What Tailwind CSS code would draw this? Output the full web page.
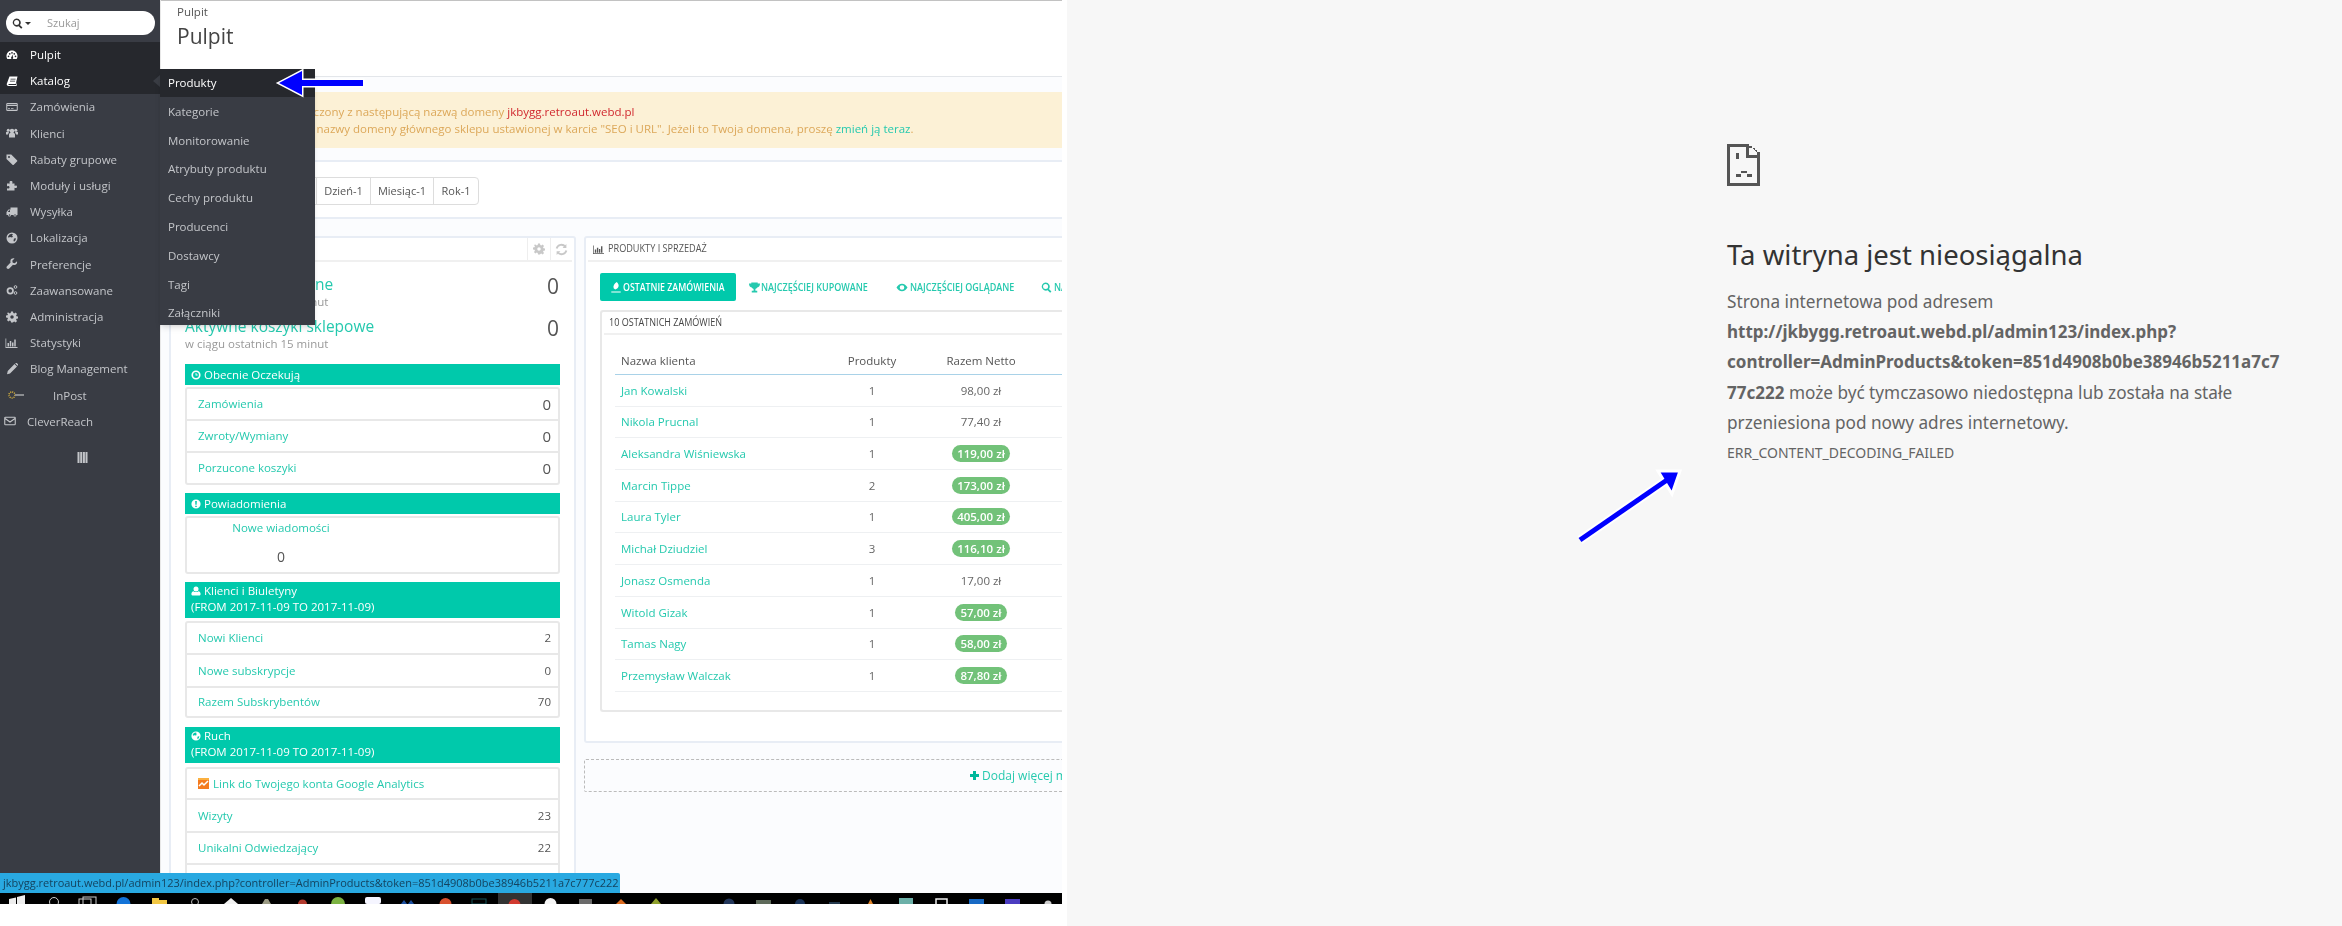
<!DOCTYPE html>
<html lang="pl">
<head>
    <meta charset="UTF-8">
    <title>Pulpit</title>
    <script src="https://cdn.jsdelivr.net/npm/@tailwindcss/browser@4"></script>
</head>
<body class="bg-white font-['Open_Sans',sans-serif]">

    <!-- shared sidebar icons -->
    <svg class="hidden">
        <symbol id="i-gauge" viewBox="0 0 24 24"><path fill-rule="evenodd" d="M12 3C5.5 3 1 8 1 14c0 2.5.7 4.700 1.800 6h18.400c1.100-1.300 1.800-3.500 1.800-6 0-6-4.500-11-11-11zM5 13a1.700 1.700 0 1 1 0 3.400A1.700 1.700 0 0 1 5 13zm2.500-5a1.700 1.700 0 1 1 0 3.400 1.700 1.700 0 0 1 0-3.400zM12 6a1.700 1.700 0 1 1 0 3.400A1.700 1.700 0 0 1 12 6zm4.500 2a1.700 1.700 0 1 1 0 3.400 1.700 1.700 0 0 1 0-3.400zM19 13a1.700 1.700 0 1 1 0 3.400 1.700 1.700 0 0 1 0-3.400zM11 16l2-5 1 5.500a2.200 2.200 0 1 1-3-.5z"/></symbol>
        <symbol id="i-book" viewBox="0 0 24 24"><path fill-rule="evenodd" d="M7 3h16l-3.500 15H6c-1.200 0-1.700.6-1.500 1.200.2.500.8.800 1.500.8h14.500L22 14v6l-1.500 2H5c-2 0-3.500-1.500-3.500-3.500 0-.6.100-1 .3-1.500zM9 7.500v1.500h10l.4-1.500zm-1 4v1.500h10l.4-1.500z"/></symbol>
        <symbol id="i-card" viewBox="0 0 24 24"><path fill-rule="evenodd" d="M3 4h18a2.500 2.500 0 0 1 2.500 2.500v11A2.500 2.500 0 0 1 21 20H3a2.500 2.500 0 0 1-2.500-2.500v-11A2.500 2.500 0 0 1 3 4zm-.5 6v7.500h19V10zm0-3.500V8h19V6.500zM4 14h4v1.500H4zm6 0h5v1.500h-5z"/></symbol>
        <symbol id="i-users" viewBox="0 0 24 24"><circle cx="12" cy="8" r="4.500"/><circle cx="4.500" cy="6.500" r="3"/><circle cx="19.500" cy="6.500" r="3"/><path d="M6 15c0-2 1.500-3 3-3h6c1.500 0 3 1 3 3v6H6zM0 11c0-1 1-1.500 2-1.500h3l1 2.500c-1.300.5-2 1.500-2 3H0zm24 0c0-1-1-1.500-2-1.500h-3l-1 2.500c1.300.5 2 1.500 2 3h4z"/></symbol>
        <symbol id="i-tag" viewBox="0 0 24 24"><path fill-rule="evenodd" d="M1 3h9.500L22 14.500c.8.800.8 1.800 0 2.500l-6.500 6.500c-.8.700-1.800.7-2.500 0L1 12zM6 6a2 2 0 1 0 0 4 2 2 0 0 0 0-4z"/></symbol>
        <symbol id="i-puzzle" viewBox="0 0 24 24"><path d="M10 2c2 0 3 1 3 2.500 0 1-.7 1.500-.7 2.500H17v4.500c1 0 1.500-.7 2.500-.7 1.500 0 2.500 1 2.500 2.700s-1 2.700-2.500 2.700c-1 0-1.500-.7-2.500-.7V21H2v-4.500c1 0 1.500.7 2.500.7C6 17.200 7 16 7 14.500s-1-2.700-2.500-2.700c-1 0-1.500.7-2.500.7V7h5.700c0-1-.7-1.500-.7-2.500C7 3 8 2 10 2z"/></symbol>
        <symbol id="i-truck" viewBox="0 0 24 24"><path fill-rule="evenodd" d="M9 3h14v15h-2a3 3 0 0 1-6 0h-5a3 3 0 0 1-6 0H1v-6l4-5h4zM3.500 12H8V8.500H6.300zM7 16.500a1.500 1.500 0 1 0 0 3 1.500 1.500 0 0 0 0-3zm11 0a1.500 1.500 0 1 0 0 3 1.500 1.500 0 0 0 0-3z"/></symbol>
        <symbol id="i-globe" viewBox="0 0 24 24"><path fill-rule="evenodd" d="M12 1a11 11 0 1 0 0 22 11 11 0 0 0 0-22zM7 5l4-1.500 3 1-2 2.500 2 2-2 2-4-1-3 1.500L4 9zm9 8l4-.5-1 4-3 3-1-2.500z"/></symbol>
        <symbol id="i-wrench" viewBox="0 0 24 24"><path d="M22 6.500l-4.500 4-4-1-1-4L17 1c-3.500-1-7 .5-8 3.500-.5 1.500-.4 3 .2 4.500L2 16.500c-1.300 1.300-1.300 3.300 0 4.500 1.300 1.300 3.200 1.300 4.500 0l7.500-7.300c4.500 1.500 9.500-2.200 8-6.700z"/></symbol>
        <symbol id="i-cog" viewBox="0 0 24 24"><path fill-rule="evenodd" d="M10 1h4l.6 3.200 2 .8L19.300 3l2.800 2.800-2 2.700.9 2 3 .5v4l-3 .5-.9 2 2 2.700-2.800 2.800-2.700-2-2 .8L14 23h-4l-.6-3.200-2-.8-2.700 2-2.800-2.800 2-2.700-.9-2-3-.5v-4l3-.5.9-2-2-2.700L4.700 3l2.700 2 2-.8zM12 8.500a3.500 3.500 0 1 0 0 7 3.500 3.500 0 0 0 0-7z"/></symbol>
        <symbol id="i-cogs" viewBox="0 0 24 24"><circle cx="8.500" cy="13.500" r="5.500" fill="none" stroke="currentColor" stroke-width="3.500"/><circle cx="19" cy="6" r="2.700" fill="none" stroke="currentColor" stroke-width="2"/><circle cx="19" cy="18" r="2.700" fill="none" stroke="currentColor" stroke-width="2"/></symbol>
        <symbol id="i-chart" viewBox="0 0 24 24"><path d="M0 3h1.500v17H24v2H0zM4 12h3v7H4zm4.500-4h3v11h-3zM13 11h3v8h-3zm4.500-6h3v14h-3z"/></symbol>
        <symbol id="i-pencil" viewBox="0 0 24 24"><path d="M17 2l5 5L8 21l-6 1.500L3.500 16zM18.500 1l1-1c.7-.5 1.500-.5 2 0l2.500 2.500c.5.500.5 1.300 0 2l-1 1z"/></symbol>
        <symbol id="i-mail" viewBox="0 0 24 24"><path fill="none" stroke="currentColor" stroke-width="2.200" d="M3 4.500h18a1.500 1.500 0 0 1 1.500 1.500v12a1.500 1.500 0 0 1-1.500 1.500H3A1.500 1.500 0 0 1 1.500 18V6A1.500 1.500 0 0 1 3 4.500zM2 7l10 7 10-7"/></symbol>
        <symbol id="i-clock" viewBox="0 0 24 24"><path fill-rule="evenodd" d="M12 1a11 11 0 1 0 0 22 11 11 0 0 0 0-22zm0 4a7 7 0 1 1 0 14 7 7 0 0 1 0-14zm-1 2v6h5v-2h-3V7z"/></symbol>
        <symbol id="i-alert" viewBox="0 0 24 24"><path fill-rule="evenodd" d="M12 1a11 11 0 1 0 0 22 11 11 0 0 0 0-22zm-2 4h4l-.5 9h-3zm.2 11h3.600v3h-3.600z"/></symbol>
        <symbol id="i-user" viewBox="0 0 24 24"><circle cx="12" cy="7" r="6"/><path d="M6 12.500c1.500 1.500 3.500 2 6 2s4.500-.5 6-2c3 .5 5 3 5 6.500 0 2.500-1.500 4-4 4H5c-2.500 0-4-1.500-4-4 0-3.500 2-6 5-6.500z"/></symbol>
        <symbol id="i-search" viewBox="0 0 24 24"><path fill-rule="evenodd" d="M10 1a9 9 0 0 1 7.300 14.300l5.500 5.500-2.800 2.800-5.500-5.500A9 9 0 1 1 10 1zm0 3.500a5.500 5.500 0 1 0 0 11 5.500 5.500 0 0 0 0-11z"/></symbol>
    </svg>

    <div class="flex w-[2342px] h-[926px] overflow-hidden">

        <!-- Left half: back office screenshot -->
        <div class="relative w-[1062px] shrink-0 overflow-hidden blur-[0.3px]">
            <div class="flex h-[893px] overflow-hidden">

                <!-- Sidebar -->
                <div class="w-[160px] shrink-0 bg-[#393c44] text-[#c3c5c9] text-[11.5px]">
                    <div class="h-[42px] pt-[11px] pl-[6px]">
                        <div class="flex items-center w-[149px] h-[24px] bg-white rounded-full text-[#222]">
                            <svg class="w-[11px] h-[11px] ml-[6px] fill-[#333]"><use href="#i-search"/></svg>
                            <span class="ml-[2px] w-0 h-0 border-x-[3px] border-x-transparent border-t-[3px] border-t-[#333]"></span>
                            <span class="ml-[16px] text-[#999] text-[11px]">Szukaj</span>
                        </div>
                    </div>
                    <div class="bg-[#26282d] text-white">
                        <div class="flex items-center h-[26px] pl-[6px]"><svg class="w-[12px] h-[12px] fill-current"><use href="#i-gauge"/></svg><span class="ml-[12px]">Pulpit</span></div>
                        <div class="relative flex items-center h-[26px] pl-[6px]"><svg class="w-[12px] h-[12px] fill-current"><use href="#i-book"/></svg><span class="ml-[12px]">Katalog</span><span class="absolute right-0 top-[7px] w-0 h-0 border-y-[6px] border-y-transparent border-r-[7px] border-r-[#3a3d44]"></span></div>
                    </div>
                    <div class="flex items-center h-[26.2px] pl-[6px]"><svg class="w-[12px] h-[12px] fill-current"><use href="#i-card"/></svg><span class="ml-[12px]">Zamówienia</span></div>
                    <div class="flex items-center h-[26.2px] pl-[6px]"><svg class="w-[12px] h-[12px] fill-current"><use href="#i-users"/></svg><span class="ml-[12px]">Klienci</span></div>
                    <div class="flex items-center h-[26.2px] pl-[6px]"><svg class="w-[12px] h-[12px] fill-current"><use href="#i-tag"/></svg><span class="ml-[12px]">Rabaty grupowe</span></div>
                    <div class="flex items-center h-[26.2px] pl-[6px]"><svg class="w-[12px] h-[12px] fill-current"><use href="#i-puzzle"/></svg><span class="ml-[12px]">Moduły i usługi</span></div>
                    <div class="flex items-center h-[26.2px] pl-[6px]"><svg class="w-[12px] h-[12px] fill-current"><use href="#i-truck"/></svg><span class="ml-[12px]">Wysyłka</span></div>
                    <div class="flex items-center h-[26.2px] pl-[6px]"><svg class="w-[12px] h-[12px] fill-current"><use href="#i-globe"/></svg><span class="ml-[12px]">Lokalizacja</span></div>
                    <div class="flex items-center h-[26.2px] pl-[6px]"><svg class="w-[12px] h-[12px] fill-current"><use href="#i-wrench"/></svg><span class="ml-[12px]">Preferencje</span></div>
                    <div class="flex items-center h-[26.2px] pl-[6px]"><svg class="w-[12px] h-[12px] fill-none stroke-none text-current"><use href="#i-cogs"/></svg><span class="ml-[12px]">Zaawansowane</span></div>
                    <div class="flex items-center h-[26.2px] pl-[6px]"><svg class="w-[12px] h-[12px] fill-current"><use href="#i-cog"/></svg><span class="ml-[12px]">Administracja</span></div>
                    <div class="flex items-center h-[26.2px] pl-[5px]"><svg class="w-[13px] h-[12px] fill-current"><use href="#i-chart"/></svg><span class="ml-[12px]">Statystyki</span></div>
                    <div class="flex items-center h-[26.2px] pl-[6px]"><svg class="w-[12px] h-[12px] fill-current"><use href="#i-pencil"/></svg><span class="ml-[12px]">Blog Management</span></div>
                    <div class="flex items-center h-[26.2px] pl-[7px]">
                        <svg class="w-[18px] h-[10px]" viewBox="0 0 18 10"><circle cx="5" cy="5" r="3" fill="none" stroke="#d8b23c" stroke-width="1.500" stroke-dasharray="1 1"/><rect x="8" y="4" width="9" height="2" fill="#8b8d90"/></svg>
                        <span class="ml-[28px]">InPost</span>
                    </div>
                    <div class="flex items-center h-[26.2px] pl-[4px]"><svg class="w-[12px] h-[12px]"><use href="#i-mail"/></svg><span class="ml-[11px]">CleverReach</span></div>
                    <div class="flex justify-center pt-[18px] pl-[4px]">
                        <svg class="w-[11px] h-[11px] fill-[#c3c5c9]" viewBox="0 0 10 11"><path d="M0 0h2v11H0zm2.700 0h2v11h-2zm2.700 0h2v11h-2zm2.600 0h2v11H8z"/></svg>
                    </div>
                </div>

                <!-- Page content -->
                <div class="flex-1 min-w-0 bg-[#fbfcfe] text-[#666] border-l border-l-[#e8e8e8]">
                    <div class="h-[77px] bg-white border-t border-t-[#c2c2c2] border-b border-b-[#e3e6ea] pl-[16px] pt-[3px]">
                        <div class="text-[11.5px] leading-[16px] text-[#555]">Pulpit</div>
                        <div class="text-[21px] leading-[30px] mt-[1px] text-[#444]">Pulpit</div>
                    </div>

                    <div class="mt-[15px] h-[56px] bg-[#fcf1d6] text-[#dca85a] text-[11.5px] leading-[17px] pt-[11px] pl-[50px] whitespace-nowrap">
                        <div>Jesteś obecnie połączony z następującą nazwą domeny <span class="text-[#d0282f]">jkbygg.retroaut.webd.pl</span></div>
                        <div class="ml-[15px]">Różni się ona od nazwy domeny głównego sklepu ustawionej w karcie "SEO i URL". Jeżeli to Twoja domena, proszę <span class="text-[#25c9ae]">zmień ją teraz</span>.</div>
                    </div>

                    <div class="mt-[12px] h-[59px] bg-white border-y-2 border-y-[#e8edf5] pt-[15px] pl-[29px]">
                        <div class="flex h-[28px] text-[11px] text-[#555] border border-[#ddd] rounded-sm w-fit bg-white">
                            <div class="flex items-center justify-center w-[40px] border-r border-r-[#ddd]">Dzień</div>
                            <div class="flex items-center justify-center w-[50px] border-r border-r-[#ddd]">Miesiąc</div>
                            <div class="flex items-center justify-center w-[36px] border-r border-r-[#ddd]">Rok</div>
                            <div class="flex items-center justify-center w-[54px] border-r border-r-[#ddd]">Dzień-1</div>
                            <div class="flex items-center justify-center w-[63px] border-r border-r-[#ddd]">Miesiąc-1</div>
                            <div class="flex items-center justify-center w-[44px]">Rok-1</div>
                        </div>
                    </div>

                    <div class="flex gap-[8px] pl-[8px] pt-[17px] w-[1100px]">

                        <!-- Left panel -->
                        <div class="w-[407px] h-[700px] shrink-0 bg-white border-2 border-[#e8edf5] rounded-[3px]">
                            <div class="flex justify-end h-[24px] mx-[2px] border-b-2 border-b-[#f0f0f0] text-[#c8c8c8]">
                                <div class="flex items-center justify-center w-[23px] border-l border-l-[#eee]"><svg class="w-[12px] h-[12px] fill-current"><use href="#i-cog"/></svg></div>
                                <div class="flex items-center justify-center w-[22px] border-l border-l-[#eee]">
                                    <svg class="w-[13px] h-[13px]" viewBox="0 0 24 24" fill="none" stroke="currentColor" stroke-width="3.500"><path d="M3 10a9 9 0 0 1 16-3M21 14a9 9 0 0 1-16 3"/><path d="M21 2v7h-7M3 22v-7h7" fill="currentColor" stroke="none"/></svg>
                                </div>
                            </div>
                            <div class="px-[14px] pt-[12px]">
                                <div class="flex justify-between h-[42px]">
                                    <div>
                                        <div class="text-[15.5px] leading-[20px] text-[#25c9ae]">Odwiedzający online</div>
                                        <div class="text-[11.5px] leading-[16px] text-[#999]">w ciągu ostatnich 30 minut</div>
                                    </div>
                                    <div class="text-[21px] leading-[24px] pr-[1px] text-[#555]">0</div>
                                </div>
                                <div class="flex justify-between h-[42px]">
                                    <div>
                                        <div class="text-[15.5px] leading-[20px] text-[#25c9ae]">Aktywne koszyki sklepowe</div>
                                        <div class="text-[11.5px] leading-[16px] text-[#999]">w ciągu ostatnich 15 minut</div>
                                    </div>
                                    <div class="text-[21px] leading-[24px] pr-[1px] text-[#555]">0</div>
                                </div>

                                <div class="flex items-center gap-[3px] mt-[6px] h-[21px] pl-[6px] bg-[#00c9ab] text-white text-[11.5px]"><svg class="w-[10px] h-[10px] fill-current"><use href="#i-clock"/></svg>Obecnie Oczekują</div>
                                <div class="mt-[2px] border-2 border-[#e8e8e8] rounded-[3px] text-[11.5px]">
                                    <div class="flex justify-between items-center h-[32px] pl-[11px] pr-[7px] border-b-2 border-b-[#e8e8e8]"><span class="text-[#25c9ae]">Zamówienia</span><span class="text-[15px] text-[#555]">0</span></div>
                                    <div class="flex justify-between items-center h-[32px] pl-[11px] pr-[7px] border-b-2 border-b-[#e8e8e8]"><span class="text-[#25c9ae]">Zwroty/Wymiany</span><span class="text-[15px] text-[#555]">0</span></div>
                                    <div class="flex justify-between items-center h-[30px] pl-[11px] pr-[7px]"><span class="text-[#25c9ae]">Porzucone koszyki</span><span class="text-[15px] text-[#555]">0</span></div>
                                </div>

                                <div class="flex items-center gap-[3px] mt-[8px] h-[21px] pl-[6px] bg-[#00c9ab] text-white text-[11.5px]"><svg class="w-[10px] h-[10px] fill-current"><use href="#i-alert"/></svg>Powiadomienia</div>
                                <div class="mt-[2px] h-[58px] border-2 border-[#e8e8e8] rounded-[3px] text-center w-full">
                                    <div class="w-[188px] text-[11.5px] leading-[16px] pt-[2px] text-[#25c9ae]">Nowe wiadomości</div>
                                    <div class="w-[188px] text-[14px] leading-[20px] mt-[11px] text-[#555]">0</div>
                                </div>

                                <div class="mt-[8px] h-[36px] pl-[6px] pt-[1px] bg-[#00c9ab] text-white text-[11.5px] leading-[16px]">
                                    <div class="flex items-center gap-[3px]"><svg class="w-[10px] h-[10px] fill-current"><use href="#i-user"/></svg>Klienci i Biuletyny</div>
                                    <div>(FROM 2017-11-09 TO 2017-11-09)</div>
                                </div>
                                <div class="mt-[3px] border-2 border-[#e8e8e8] rounded-[3px] text-[11.5px]">
                                    <div class="flex justify-between items-center h-[32px] pl-[11px] pr-[7px] border-b-2 border-b-[#e8e8e8]"><span class="text-[#25c9ae]">Nowi Klienci</span><span class="text-[#555]">2</span></div>
                                    <div class="flex justify-between items-center h-[33px] pl-[11px] pr-[7px] border-b-2 border-b-[#e8e8e8]"><span class="text-[#25c9ae]">Nowe subskrypcje</span><span class="text-[#555]">0</span></div>
                                    <div class="flex justify-between items-center h-[28px] pl-[11px] pr-[7px]"><span class="text-[#25c9ae]">Razem Subskrybentów</span><span class="text-[#555]">70</span></div>
                                </div>

                                <div class="mt-[9px] h-[36px] pl-[6px] pt-[1px] bg-[#00c9ab] text-white text-[11.5px] leading-[16px]">
                                    <div class="flex items-center gap-[3px]"><svg class="w-[10px] h-[10px] fill-current"><use href="#i-globe"/></svg>Ruch</div>
                                    <div>(FROM 2017-11-09 TO 2017-11-09)</div>
                                </div>
                                <div class="mt-[4px] border-2 border-[#e8e8e8] rounded-[3px] text-[11.5px]">
                                    <div class="flex items-center gap-[4px] h-[31px] pl-[11px] border-b-2 border-b-[#e8e8e8] text-[#25c9ae]">
                                        <svg class="w-[11px] h-[11px]" viewBox="0 0 11 11"><rect width="11" height="11" fill="#f47b20"/><rect x="0" y="0" width="11" height="2" fill="#fbb040"/><path d="M1 8l3-3 2 2 4-4" fill="none" stroke="#fff" stroke-width="1.500"/></svg>
                                        Link do Twojego konta Google Analytics
                                    </div>
                                    <div class="flex justify-between items-center h-[33px] pl-[11px] pr-[7px] border-b-2 border-b-[#e8e8e8]"><span class="text-[#25c9ae]">Wizyty</span><span class="text-[#555]">23</span></div>
                                    <div class="flex justify-between items-center h-[32px] pl-[11px] pr-[7px] border-b-2 border-b-[#e8e8e8]"><span class="text-[#25c9ae]">Unikalni Odwiedzający</span><span class="text-[#555]">22</span></div>
                                    <div class="h-[32px]"></div>
                                </div>
                            </div>
                        </div>

                        <!-- Right panel -->
                        <div class="w-[600px] shrink-0">
                            <div class="h-[507px] bg-white border-2 border-[#e8edf5] rounded-[3px]">
                                <div class="flex items-center gap-[3px] h-[24px] mx-[2px] pl-[4px] border-b-2 border-b-[#f0f0f0] text-[10.5px] text-[#555]">
                                    <svg class="w-[13px] h-[11px] fill-current"><use href="#i-chart"/></svg>
                                    <span class="origin-left scale-x-[.87] whitespace-nowrap">PRODUKTY I SPRZEDAŻ</span>
                                </div>

                                <div class="flex items-center h-[28px] mt-[11px] ml-[14px] text-[11px] font-semibold text-[#25c9ae] whitespace-nowrap">
                                    <div class="flex shrink-0 items-center justify-center gap-[2px] w-[136px] h-[28px] bg-[#00c9ab] text-white rounded-[2px]">
                                        <svg class="w-[10px] h-[11px] fill-current" viewBox="0 0 12 14"><path d="M7 0c2 2 3 4 2 6.500-.7 1.500-2 2.500-4 3L3 8C2 5 4 2 7 0zM0 12h12v1.500H0z"/></svg>
                                        <span class="w-[102px]"><span class="inline-block origin-left scale-x-[.80]">OSTATNIE ZAMÓWIENIA</span></span>
                                    </div>
                                    <svg class="shrink-0 ml-[13px] w-[11px] h-[11px] fill-current" viewBox="0 0 24 24"><path d="M5 1h14v2h5c0 5-2 8-6 9-1 2-3 3-4 3v4h4v4H6v-4h4v-4c-1 0-3-1-4-3-4-1-6-4-6-9h5z"/></svg>
                                    <span class="shrink-0 w-[135px] ml-[1px]"><span class="inline-block origin-left scale-x-[.82]">NAJCZĘŚCIEJ KUPOWANE</span></span>
                                    <svg class="shrink-0 w-[12px] h-[11px] fill-current" viewBox="0 0 24 24"><path fill-rule="evenodd" d="M12 4c5 0 9 3 12 8-3 5-7 8-12 8S3 17 0 12c3-5 7-8 12-8zm0 3a5 5 0 1 0 0 10 5 5 0 0 0 0-10z"/></svg>
                                    <span class="shrink-0 w-[131px] ml-[2px]"><span class="inline-block origin-left scale-x-[.82]">NAJCZĘŚCIEJ OGLĄDANE</span></span>
                                    <svg class="shrink-0 w-[11px] h-[11px] fill-current"><use href="#i-search"/></svg>
                                    <span class="shrink-0 ml-[2px]"><span class="inline-block origin-left scale-x-[.82]">NAJCZĘŚCIEJ WYSZUKIWANE</span></span>
                                </div>

                                <div class="mt-[9px] ml-[14px] h-[402px] border-2 border-[#e8e8e8] border-r-0 rounded-[3px]">
                                    <div class="flex items-center h-[23px] ml-[2px] pl-[5px] border-b-2 border-b-[#f0f0f0] text-[10.5px] text-[#444]">
                                        <span class="origin-left scale-x-[.86] whitespace-nowrap">10 OSTATNICH ZAMÓWIEŃ</span>
                                    </div>
                                    <div class="ml-[13px] mt-[16px] text-[11.5px]">
                                        <div class="grid grid-cols-[202px_110px_108px_1fr] h-[24px] pt-[1px] items-start border-b border-b-[#a9d2e8] text-[#555]"><div class="pl-[6px]">Nazwa klienta</div><div class="text-center">Produkty</div><div class="text-center">Razem Netto</div></div>
                                        <div class="grid grid-cols-[202px_110px_108px_1fr] h-[31.7px] items-center border-b border-b-[#eef0f2] text-[#666]"><div class="pl-[6px] text-[#25c9ae]">Jan Kowalski</div><div class="text-center">1</div><div class="text-center">98,00 zł</div></div>
                                        <div class="grid grid-cols-[202px_110px_108px_1fr] h-[31.7px] items-center border-b border-b-[#eef0f2] text-[#666]"><div class="pl-[6px] text-[#25c9ae]">Nikola Prucnal</div><div class="text-center">1</div><div class="text-center">77,40 zł</div></div>
                                        <div class="grid grid-cols-[202px_110px_108px_1fr] h-[31.7px] items-center border-b border-b-[#eef0f2] text-[#666]"><div class="pl-[6px] text-[#25c9ae]">Aleksandra Wiśniewska</div><div class="text-center">1</div><div class="text-center"><span class="inline-block px-[5px] leading-[17px] rounded-full bg-[#72c279] text-white font-semibold">119,00 zł</span></div></div>
                                        <div class="grid grid-cols-[202px_110px_108px_1fr] h-[31.7px] items-center border-b border-b-[#eef0f2] text-[#666]"><div class="pl-[6px] text-[#25c9ae]">Marcin Tippe</div><div class="text-center">2</div><div class="text-center"><span class="inline-block px-[5px] leading-[17px] rounded-full bg-[#72c279] text-white font-semibold">173,00 zł</span></div></div>
                                        <div class="grid grid-cols-[202px_110px_108px_1fr] h-[31.7px] items-center border-b border-b-[#eef0f2] text-[#666]"><div class="pl-[6px] text-[#25c9ae]">Laura Tyler</div><div class="text-center">1</div><div class="text-center"><span class="inline-block px-[5px] leading-[17px] rounded-full bg-[#72c279] text-white font-semibold">405,00 zł</span></div></div>
                                        <div class="grid grid-cols-[202px_110px_108px_1fr] h-[31.7px] items-center border-b border-b-[#eef0f2] text-[#666]"><div class="pl-[6px] text-[#25c9ae]">Michał Dziudziel</div><div class="text-center">3</div><div class="text-center"><span class="inline-block px-[5px] leading-[17px] rounded-full bg-[#72c279] text-white font-semibold">116,10 zł</span></div></div>
                                        <div class="grid grid-cols-[202px_110px_108px_1fr] h-[31.7px] items-center border-b border-b-[#eef0f2] text-[#666]"><div class="pl-[6px] text-[#25c9ae]">Jonasz Osmenda</div><div class="text-center">1</div><div class="text-center">17,00 zł</div></div>
                                        <div class="grid grid-cols-[202px_110px_108px_1fr] h-[31.7px] items-center border-b border-b-[#eef0f2] text-[#666]"><div class="pl-[6px] text-[#25c9ae]">Witold Gizak</div><div class="text-center">1</div><div class="text-center"><span class="inline-block px-[5px] leading-[17px] rounded-full bg-[#72c279] text-white font-semibold">57,00 zł</span></div></div>
                                        <div class="grid grid-cols-[202px_110px_108px_1fr] h-[31.7px] items-center border-b border-b-[#eef0f2] text-[#666]"><div class="pl-[6px] text-[#25c9ae]">Tamas Nagy</div><div class="text-center">1</div><div class="text-center"><span class="inline-block px-[5px] leading-[17px] rounded-full bg-[#72c279] text-white font-semibold">58,00 zł</span></div></div>
                                        <div class="grid grid-cols-[202px_110px_108px_1fr] h-[31.7px] items-center border-b border-b-[#eef0f2] text-[#666]"><div class="pl-[6px] text-[#25c9ae]">Przemysław Walczak</div><div class="text-center">1</div><div class="text-center"><span class="inline-block px-[5px] leading-[17px] rounded-full bg-[#72c279] text-white font-semibold">87,80 zł</span></div></div>
                                    </div>
                                </div>
                            </div>
                            <div class="flex items-center gap-[3px] mt-[16px] h-[33px] pl-[385px] border border-dashed border-[#bbb] rounded-[2px] text-[12px] text-[#25c9ae] whitespace-nowrap">
                                <svg class="w-[9px] h-[9px] fill-[#00b89c]" viewBox="0 0 9 9"><path d="M3 0h3v3h3v3H6v3H3V6H0V3h3z"/></svg>
                                Dodaj więcej modułów
                            </div>
                        </div>
                    </div>
                </div>
            </div>

            <!-- Taskbar, cut off by the screenshot edge -->
            <svg class="block w-[1062px] h-[11px] bg-black" viewBox="0 0 1062 11">
                <rect x="498" width="34" height="11" fill="#333"/>
                <path d="M9 6l7-1.500V11H9zm8-2l8-2v9h-8z" fill="#eee"/>
                <circle cx="54" cy="9" r="4.500" fill="none" stroke="#ccc"/>
                <rect x="79" y="6" width="12" height="6" fill="none" stroke="#ccc"/><rect x="83" y="4" width="13" height="8" fill="none" stroke="#ccc"/>
                <circle cx="123.500" cy="11" r="7" fill="#1273d8"/>
                <rect x="152" y="7" width="15" height="4" fill="#f2c744"/><rect x="152" y="5" width="7" height="2" fill="#f2c744"/>
                <circle cx="195" cy="9" r="3.500" fill="none" stroke="#bbb"/>
                <path d="M224 11l7-6 7 6z" fill="#f2f2f2"/>
                <path d="M262 11l3-5h3l3 5z" fill="#9a9a84"/>
                <circle cx="302.500" cy="11" r="4.500" fill="#b23a2e"/>
                <circle cx="338" cy="11" r="7" fill="#7cb342"/>
                <rect x="365" y="4" width="16" height="7" rx="2" fill="#f5f5ff"/>
                <path d="M401 11l3-4 3 4zm7 0l3-4 3 4z" fill="#1c4fa0"/>
                <circle cx="445.500" cy="11" r="6" fill="#d8502e"/>
                <rect x="472" y="6" width="14" height="5" fill="none" stroke="#15555a"/>
                <circle cx="514.500" cy="12" r="6" fill="#d13a2f"/>
                <circle cx="550.500" cy="11" r="6" fill="#f5f5f5"/>
                <rect x="579" y="6" width="13" height="5" fill="#6a6a6a"/>
                <path d="M616 11l5-5 5 5z" fill="#d9691e"/>
                <path d="M651 11l5-6 5 6z" fill="#8fa02c"/>
                <circle cx="729" cy="11" r="5.500" fill="#22365a"/>
                <rect x="756" y="7" width="15" height="4" fill="#5e6a5a"/>
                <circle cx="800" cy="11" r="5" fill="#1a3358"/>
                <rect x="829" y="9" width="11" height="2" fill="#23384c"/>
                <path d="M868 11l2.500-5 2.500 5z" fill="#e0842a"/>
                <rect x="899" y="5" width="14" height="6" fill="#6cb0a8"/>
                <rect x="936" y="6" width="11" height="6" fill="none" stroke="#eee" stroke-width="1.500"/>
                <rect x="969" y="6" width="15" height="5" fill="#1769c4"/>
                <rect x="1005" y="6" width="15" height="5" fill="#4b3cc0"/>
                <circle cx="1048" cy="11" r="3.500" fill="#ccc"/>
            </svg>

            <!-- Browser status bubble -->
            <div class="absolute left-0 top-[873px] w-[620px] h-[20px] bg-[#29a9e1] rounded-tr-[2px] text-[11.5px] leading-[20px] pl-[3px] text-[#14435f] whitespace-nowrap">
                <span class="inline-block origin-left scale-x-[.955]">jkbygg.retroaut.webd.pl/admin123/index.php?controller=AdminProducts&amp;token=851d4908b0be38946b5211a7c777c222</span>
            </div>

            <!-- Catalog flyout -->
            <div class="absolute left-[160px] top-[69px] w-[155px] h-[256px] bg-[#393c44] text-[#c3c5c9] text-[11.5px] shadow-md">
                <div class="flex items-center h-[28px] pl-[8px] bg-[#26282d] text-white">Produkty</div>
                <div class="flex items-center h-[28.8px] pl-[8px]">Kategorie</div>
                <div class="flex items-center h-[28.8px] pl-[8px]">Monitorowanie</div>
                <div class="flex items-center h-[28.8px] pl-[8px]">Atrybuty produktu</div>
                <div class="flex items-center h-[28.8px] pl-[8px]">Cechy produktu</div>
                <div class="flex items-center h-[28.8px] pl-[8px]">Producenci</div>
                <div class="flex items-center h-[28.8px] pl-[8px]">Dostawcy</div>
                <div class="flex items-center h-[28.8px] pl-[8px]">Tagi</div>
                <div class="flex items-center h-[28.8px] pl-[8px]">Załączniki</div>
            </div>

            <!-- Annotation arrow pointing at Produkty -->
            <svg class="absolute left-[270px] top-[64px] w-[100px] h-[40px]" viewBox="0 0 100 40">
                <path d="M9 19L32 7v9h61v6H32v9z" fill="#00f" stroke="#fff" stroke-width="3"/>
                <path d="M9 19L32 7v9h61v6H32v9z" fill="#00f"/>
            </svg>
        </div>

        <div class="w-[5px] shrink-0 bg-white"></div>

        <!-- Right half: browser error page -->
        <div class="relative flex-1 bg-[#f7f7f7] pl-[660px] pt-[144px] font-['Noto_Sans',sans-serif] text-[#646464]">
            <svg class="block w-[33px] h-[42px]" viewBox="0 0 33 42" shape-rendering="crispEdges" fill="#555">
                <path fill-rule="evenodd" d="M0 0H22V2H25V4H28V6H30V8H33V42H0ZM3 3V39H30V14H19V3ZM22 4V11H30V9L25 4Z"/>
                <path d="M9 9h3v6H9zM14 27h6v2h-6zM9 30h5v3H9zM20 30h5v3h-5z"/>
            </svg>
            <h1 class="mt-[50px] text-[27.5px] leading-[38px] text-[#333] whitespace-nowrap">Ta witryna jest nieosiągalna</h1>
            <div class="mt-[13px] text-[17.2px] leading-[30.2px] whitespace-nowrap">
                Strona internetowa pod adresem<br>
                <strong class="font-bold text-[17px]">http://jkbygg.retroaut.webd.pl/admin123/index.php?<br>controller=AdminProducts&amp;token=851d4908b0be38946b5211a7c7<br>77c222</strong> może być tymczasowo niedostępna lub została na stałe<br>
                przeniesiona pod nowy adres internetowy.
            </div>
            <div class="text-[14px] leading-[30px] whitespace-nowrap">ERR_CONTENT_DECODING_FAILED</div>

            <svg class="absolute left-[508px] top-[465px] w-[110px] h-[80px]" viewBox="0 0 110 80">
                <path d="M5 75L92 15" stroke="#fff" stroke-width="9"/>
                <path d="M83 6h22l-8 23z" fill="#00f" stroke="#fff" stroke-width="3"/>
                <path d="M5 75L92 15" stroke="#00f" stroke-width="5"/>
            </svg>
        </div>
    </div>
</body>
</html>
